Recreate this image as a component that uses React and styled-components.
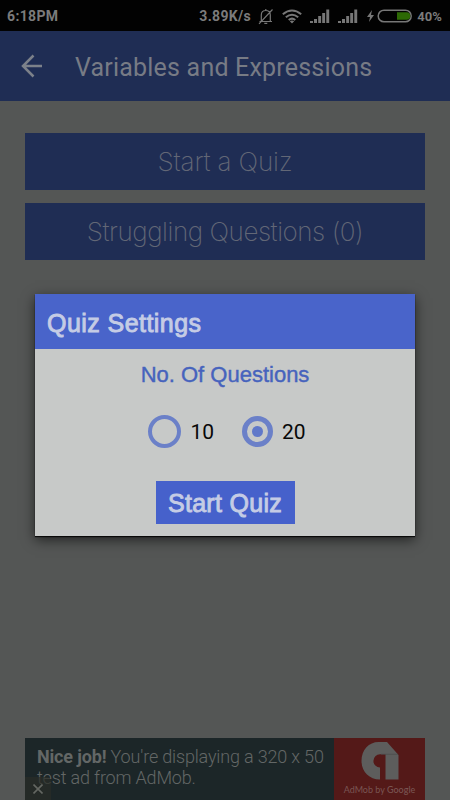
import styled, { createGlobalStyle } from "styled-components";

const App = () => {
  return (
    <>
      <GlobalStyle />
      <Screen>
        <StatusBar>
          <StatusText>6:18PM</StatusText>
          <StatusRight>
            <StatusText>3.89K/s</StatusText>
            <MuteIcon />
            <WifiIcon />
            <SignalIcon />
            <SignalIcon />
            <BatteryIcon />
            <Percent>40%</Percent>
          </StatusRight>
        </StatusBar>
        <AppBar>
          <svg width="21" height="24" viewBox="0 0 21 24" fill="none" stroke="#7c818a" strokeWidth="2.5">
            <path d="M12.5 1.5 2 12l10.500 10.500M2 12h19" />
          </svg>
          <PageTitle>Variables and Expressions</PageTitle>
        </AppBar>
        <Menu>
          <MenuButton $spacing="-0.15px">Start a Quiz</MenuButton>
          <MenuButton $spacing="-0.45px">Struggling Questions (0)</MenuButton>
        </Menu>
        <AdBanner>
          <AdText>
            <b>Nice job!</b> You're displaying a 320 x 50
            <br />
            test ad from AdMob.
          </AdText>
          <AdLogo>
            <AdMobIcon />
            <AdCaption>
              AdMob by <b>Google</b>
            </AdCaption>
          </AdLogo>
          <AdClose>
            <svg width="10" height="10" viewBox="0 0 10 10" stroke="#646762" strokeWidth="1.6">
              <path d="M0.500 0.500 9.500 9.500M9.500 0.500 0.500 9.500" />
            </svg>
          </AdClose>
        </AdBanner>
        <QuizModal />
      </Screen>
    </>
  );
};
export default App;

const QuizModal = () => {
  return (
    <Modal>
      <ModalHeader>Quiz Settings</ModalHeader>
      <ModalBody>
        <Label>No. Of Questions</Label>
        <Options>
          <Option>
            <Radio $size="33px" />
            <span>10</span>
          </Option>
          <Option>
            <Radio $size="31px" $checked />
            <span>20</span>
          </Option>
        </Options>
        <StartButton>Start Quiz</StartButton>
      </ModalBody>
    </Modal>
  );
};

const MuteIcon = () => (
  <Icon $left="7px" width="16" height="17" viewBox="0 0 16 17" fill="none" stroke="#777" strokeWidth="1.2">
    <path d="M1.500 13.500h12.500M3.300 13V7c0-2.700 1.700-4.500 4.500-4.500s4.500 1.800 4.500 4.500v6.500M7.800 2.500V1M6.300 15.300h3M1 15.800 14.500 1.500" />
  </Icon>
);

const WifiIcon = () => (
  <Icon $left="8px" width="20" height="15" viewBox="0 0 20 15" fill="none" stroke="#777" strokeWidth="2">
    <path d="M0.800 5.300Q10-2.200 19.200 5.300M3.800 8.300Q10 3.200 16.200 8.300M6.700 11Q10 8.300 13.300 11" />
    <path d="m7.800 12.300 2.200 2.200 2.200-2.200q-2.200-1.500-4.400 0z" fill="#777" stroke="none" />
  </Icon>
);

const SignalIcon = () => (
  <Icon $left="8px" width="20" height="14" viewBox="0 0 20 14" fill="#777">
    <path d="M0 12h3v2H0zM4 10h3v4H4zM8.200 7h2.900v7H8.200zM12.200 4h2.900v10h-2.900zM16.300.500h2.900V14h-2.900z" />
  </Icon>
);

const BatteryIcon = () => (
  <Icon $left="9px" width="46" height="14" viewBox="0 0 46 14" fill="none">
    <path d="M5 1 0 8h3l-1 5 5-7H4z" fill="#777" />
    <rect x="11.200" y="1.200" width="33" height="11.600" rx="5.800" stroke="#777" strokeWidth="1.500" />
    <path d="M30 3.200h9.500a3.800 3.800 0 0 1 0 7.600H30z" fill="#2d6905" />
  </Icon>
);

const AdMobIcon = () => (
  <svg width="38" height="38" viewBox="0 0 38 38" fill="#5d5d5c">
    <path d="M17.500 0H26l11.500 13v24.500H24.500V12.300h-5.500a6.600 6.600 0 0 0 0 13.200v12C8 37.500.500 29.500.500 18.800.500 8 8 0 17.500 0z" />
    <path d="M20 12.300h17" stroke="#4b4b4a" strokeWidth=".7" />
  </svg>
);

const GlobalStyle = createGlobalStyle`
  * {
    box-sizing: border-box;
  }

  body {
    margin: 0;
    background-color: #545655;
    font-family: Roboto, "Liberation Sans", sans-serif;
  }

  button {
    border: none;
    padding: 0;
    cursor: pointer;
  }
`;

const Screen = styled.div`
  position: relative;
  display: flex;
  flex-direction: column;
  width: 450px;
  height: 800px;
  overflow: hidden;
  background-color: #545655;
`;

const StatusBar = styled.div`
  display: flex;
  align-items: center;
  justify-content: space-between;
  height: 31px;
  padding: 1px 8px 0 7px;
  background-color: #020202;
  color: #7b7b7b;
`;

const StatusText = styled.span`
  font-size: 14px;
  font-weight: 700;
  letter-spacing: 0.35px;
`;

const StatusRight = styled.div`
  display: flex;
  align-items: center;
`;

const Percent = styled.span`
  margin-left: 4px;
  font-size: 13px;
  font-weight: 700;
  letter-spacing: 0.1px;
`;

const Icon = styled.svg`
  margin-left: ${({ $left }) => $left};
`;

const AppBar = styled.header`
  display: flex;
  align-items: center;
  height: 70px;
  padding-left: 21px;
  background-color: #1f2d54;
`;

const PageTitle = styled.h1`
  margin: 3px 0 0 33px;
  color: #777b85;
  font-size: 25px;
  font-weight: 400;
  letter-spacing: 0.2px;
  white-space: nowrap;
`;

const Menu = styled.div`
  display: flex;
  flex-direction: column;
  gap: 13px;
  padding: 32px 25px 0;
`;

const MenuButton = styled.button`
  height: 57px;
  padding-bottom: 1px;
  background-color: #1f2d54;
  color: #626776;
  font-family: Inter, "Liberation Sans", sans-serif;
  font-size: 26px;
  font-weight: 200;
  letter-spacing: ${({ $spacing }) => $spacing};
`;

const AdBanner = styled.div`
  position: relative;
  display: flex;
  height: 62px;
  margin: auto 25px 0;
  background-color: #1c2628;
`;

const AdText = styled.p`
  width: 309px;
  margin: 0;
  padding: 8px 0 0 12px;
  color: #636766;
  font-size: 18px;
  font-weight: 300;
  letter-spacing: -0.17px;
  line-height: 21px;
  white-space: nowrap;

  & > b {
    font-weight: 700;
  }
`;

const AdLogo = styled.div`
  display: flex;
  flex: 1;
  flex-direction: column;
  align-items: center;
  padding-top: 4px;
  background-color: #541918;
`;

const AdCaption = styled.span`
  margin-top: 3px;
  color: #795553;
  font-family: Lato, sans-serif;
  font-size: 9px;
  line-height: 13px;
  white-space: nowrap;

  & > b {
    font-weight: 500;
  }
`;

const AdClose = styled.button`
  position: absolute;
  left: 0;
  bottom: 0;
  display: flex;
  align-items: center;
  justify-content: center;
  width: 26px;
  height: 23px;
  border-radius: 0 4px 0 0;
  background-color: rgba(42, 44, 39, 0.7);
`;

const Modal = styled.div`
  position: absolute;
  top: 294px;
  left: 35px;
  width: 380px;
  height: 242px;
  background-color: #c7c9c8;
  box-shadow: 0 1px 1px rgba(0, 0, 0, 0.8), 0 4px 12px rgba(0, 0, 0, 0.6);
`;

const ModalHeader = styled.div`
  display: flex;
  align-items: center;
  height: 55px;
  padding: 3px 12px 0;
  background-color: #4964ca;
  color: #c5cce5;
  font-family: "Liberation Sans", sans-serif;
  font-size: 25px;
  letter-spacing: 0.45px;
  -webkit-text-stroke: 0.9px #c5cce5;
`;

const ModalBody = styled.div`
  display: flex;
  flex-direction: column;
  align-items: center;
`;

const Label = styled.span`
  margin-top: 13px;
  color: #4663bd;
  font-family: "Liberation Sans", sans-serif;
  font-size: 22px;
  line-height: 26px;
  -webkit-text-stroke: 0.4px #4663bd;
`;

const Options = styled.div`
  display: flex;
  gap: 28px;
  margin-top: 27px;
  padding-left: 4px;
`;

const Option = styled.label`
  display: flex;
  align-items: center;
  gap: 9px;
  height: 33px;
  color: #080808;
  font-size: 21px;
`;

const Radio = styled.span`
  display: flex;
  align-items: center;
  justify-content: center;
  width: ${({ $size }) => $size};
  height: ${({ $size }) => $size};
  border: ${({ $checked }) => ($checked ? "5px" : "4px")} solid #6b80c8;
  border-radius: 50%;

  &::after {
    content: "";
    width: 11px;
    height: 11px;
    border-radius: 50%;
    background-color: ${({ $checked }) => ($checked ? "#6078c9" : "transparent")};
  }
`;

const StartButton = styled.button`
  width: 139px;
  height: 43px;
  margin-top: 33px;
  padding-top: 1px;
  background-color: #4661cb;
  color: #c5cce5;
  font-family: "Liberation Sans", sans-serif;
  font-size: 25px;
  letter-spacing: 0.3px;
  -webkit-text-stroke: 0.9px #c5cce5;
`;
